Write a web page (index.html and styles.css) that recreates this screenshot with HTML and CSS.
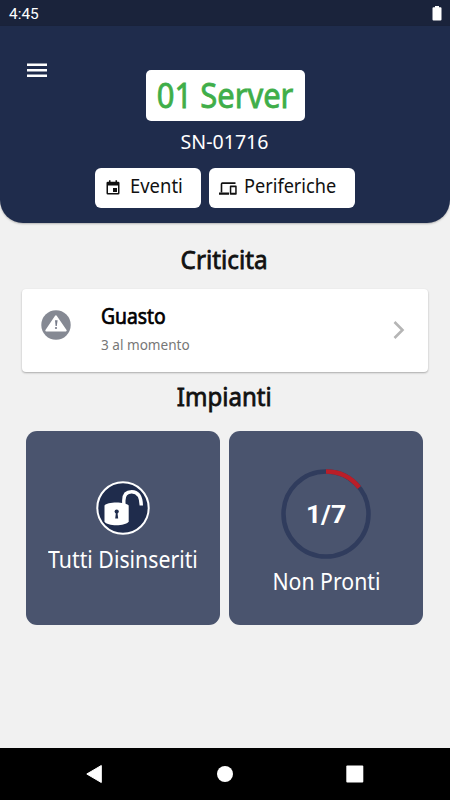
FILE: index.html
```html
<!DOCTYPE html>
<html lang="it">
<head>
<meta charset="utf-8">
<title>01 Server</title>
<link rel="stylesheet" href="styles.css">
</head>
<body>
<div class="status"><span class="time">4:45</span>
<svg class="battery" width="10" height="16" viewBox="0 0 10 16"><path d="M3 1h4v1.200h1.500q1 0 1 1V14.500q0 1-1 1h-7q-1 0-1-1V3.200q0-1 1-1H3z" fill="#fff"/></svg></div>
<header class="header">
<svg class="menu" width="20" height="16" viewBox="0 0 20 16"><path d="M0 2.700h20M0 8.300h20M0 13.700h20" stroke="#fff" stroke-width="2.400"/></svg>
<h1 class="title"><span class="t title-text">01 Server</span></h1>
<div class="serial"><span class="t serial-text">SN-01716</span></div>
<div class="actions">
<div class="btn btn-events"><svg width="14" height="16" viewBox="0 0 14 16"><path d="M1.500 1.700H3V.3h1.500v1.400h5V.3H11v1.400h1.200q1.300 0 1.300 1.300v10.200q0 1.300-1.300 1.300H1.800Q.5 14.500.5 13.200V3q0-1.300 1.300-1.300zM2 5.400v7.700h10V5.400zM7 8h4v4H7z" fill="#111" fill-rule="evenodd"/></svg><span class="t events-text">Eventi</span></div>
<div class="btn btn-devices"><svg width="18" height="14" viewBox="0 0 18 14"><path d="M2.500 10.500V2q0-.9.900-.9H16.500" fill="none" stroke="#111" stroke-width="1.600"/><path d="M0 10.500H10v2.200H0zM11.500 3.500h5.500q.7 0 .7.700v7.800q0 .7-.7.700h-5.500q-.7 0-.7-.7V4.200q0-.7.700-.7zM12.300 5.200v5.600H16.200V5.200z" fill="#111" fill-rule="evenodd"/></svg><span class="t devices-text">Periferiche</span></div>
</div>
</header>
<main>
<h2 class="heading heading-crit"><span class="t crit-text">Criticita</span></h2>
<section class="card">
<svg class="warn" width="30" height="30" viewBox="0 0 30 30"><circle cx="15" cy="15" r="14.700" fill="#858993"/><path d="M14.900 6.300L24.700 20.500H5.300z" fill="#fff" stroke="#fff" stroke-width="2" stroke-linejoin="round"/><path d="M14 10.300h2.600l-.8 5.700h-1.200z" fill="#777c8a"/><circle cx="15" cy="18" r="1.100" fill="#777c8a"/></svg>
<div class="info"><div class="name"><span class="t name-text">Guasto</span></div><div class="detail"><span class="t detail-text">3 al momento</span></div></div>
<svg class="chevron" width="12" height="18" viewBox="0 0 12 18"><path d="M1.500 1L9.500 9l-8 8" fill="none" stroke="#b5b5b5" stroke-width="2.600"/></svg>
</section>
<h2 class="heading heading-imp"><span class="t imp-text">Impianti</span></h2>
<div class="tiles">
<div class="tile tile-lock">
<svg width="54" height="54" viewBox="0 0 54 54"><circle cx="27" cy="27" r="25.700" fill="#1f2c4c" stroke="#fff" stroke-width="2"/><path d="M27.800 25V19.500C27.800 13.500 31 10.800 35.700 10.800C41 10.800 45 14.500 45.300 24.500" fill="none" stroke="#fff" stroke-width="3.400"/><path d="M8.500 24.500C11 20.500 29.500 20.500 32.700 24.500V40.500C29.500 45.500 11 45.500 8.500 40.500z" fill="#fff"/><circle cx="20.700" cy="30.600" r="2.100" fill="#1f2c4c"/><path d="M20 31h1.400l.8 6.500h-3z" fill="#1f2c4c"/></svg>
<div class="label"><span class="t lock-text">Tutti Disinseriti</span></div>
</div>
<div class="tile tile-ready">
<div class="ring"><svg width="90" height="90" viewBox="0 0 90 90"><circle cx="45" cy="45" r="42.500" fill="none" stroke="#303c5d" stroke-width="4.500"/><path d="M45 2.500A42.500 42.500 0 0 1 78.230 18.500" fill="none" stroke="#ba1e28" stroke-width="4.500"/></svg><span class="count">1/7</span></div>
<div class="label"><span class="t ready-text">Non Pronti</span></div>
</div>
</div>
</main>
<nav class="nav">
<svg width="18" height="20" viewBox="0 0 18 20"><path d="M.8 10L15.300 1.500v17z" fill="#fff" stroke="#fff" stroke-linejoin="round"/></svg>
<svg width="18" height="18" viewBox="0 0 18 18"><circle cx="9" cy="9" r="8" fill="#fff"/></svg>
<svg width="18" height="18" viewBox="0 0 18 18"><rect x=".3" y=".5" width="17" height="17" rx="1" fill="#fff"/></svg>
</nav>
</body>
</html>
```
FILE: styles.css
```css
* { box-sizing: border-box; }
body {
  margin: 0;
  width: 450px;
  height: 800px;
  display: flex;
  flex-direction: column;
  overflow: hidden;
  background: #f1f1f1;
  font-family: "Noto Sans", "Open Sans", sans-serif;
}
svg { display: block; flex: none; }
.t { display: inline-block; white-space: nowrap; }
.status {
  flex: none;
  height: 26px;
  padding: 0 8px 0 9px;
  display: flex;
  justify-content: space-between;
  align-items: center;
  background: #1a233b;
  color: #fff;
  font: 15.4px/28px Roboto, sans-serif;
}
.time { padding-top: 2px; }
.header {
  position: relative;
  flex: none;
  height: 197px;
  padding-top: 44px;
  display: flex;
  flex-direction: column;
  align-items: center;
  border-radius: 0 0 23px 23px;
  background: #1f2c4c;
  box-shadow: 0 1px 2px rgba(0, 0, 0, .25);
}
.menu { position: absolute; left: 27px; top: 36px; }
.title {
  margin: 0;
  width: 159px;
  height: 51px;
  display: flex;
  justify-content: center;
  border-radius: 5px;
  background: #fff;
  color: #3fae49;
  font-size: 34px;
  font-weight: 400;
  line-height: 50px;
  -webkit-text-stroke: .8px #3fae49;
}
.title-text { transform: scaleX(.91); }
.serial {
  margin-top: 5px;
  color: #fff;
  font-size: 20.3px;
  line-height: 31px;
}
.serial-text { transform: scaleX(.965); }
.actions { display: flex; gap: 8px; margin-top: 11px; }
.btn {
  height: 40px;
  display: flex;
  border-radius: 6px;
  background: #fff;
  color: #111;
  font-size: 19px;
  line-height: 37px;
}
.btn .t { transform-origin: left; }
.btn-events { width: 106px; padding-left: 10px; }
.btn-events svg { margin: 12px 10px 0 1px; }
.btn-devices { width: 146px; padding-left: 10px; }
.btn-devices svg { margin: 14px 7px 0 0; }
.events-text { transform: scaleX(.97); }
.devices-text { transform: scaleX(.955); }
.heading {
  margin: 0;
  text-align: center;
  color: #111;
  font-size: 26px;
  font-weight: 400;
  line-height: 40px;
  -webkit-text-stroke: .8px #111;
}
.heading-crit { margin-top: 16px; }
.heading-imp { margin-top: 4px; }
.crit-text { transform: translateX(-.5px) scaleX(.935); }
.imp-text { transform: translateX(-1px) scaleX(.925); }
.card {
  margin: 10px 22px 0;
  height: 83px;
  padding: 11px 23px 0 19px;
  display: flex;
  border-radius: 4px;
  background: #fff;
  box-shadow: 0 1px 2px rgba(0, 0, 0, .3);
}
.warn { margin-top: 10px; }
.info { flex: 1; padding-left: 30px; }
.info .t { transform-origin: left; }
.name {
  color: #000;
  font-size: 21px;
  line-height: 32px;
  -webkit-text-stroke: .7px #000;
}
.detail {
  margin-top: 1px;
  color: #777;
  font-size: 14.3px;
  line-height: 24px;
}
.name-text { transform: scaleX(.92); }
.detail-text { transform: scaleX(.95); }
.chevron { margin-top: 21px; }
.tiles { display: flex; justify-content: center; gap: 9px; margin: 15px 1px 0 0; }
.tile {
  width: 194px;
  height: 194px;
  display: flex;
  flex-direction: column;
  align-items: center;
  border-radius: 11px;
  background: #4a546e;
  color: #fff;
}
.tile-lock { padding-top: 50px; }
.tile-ready { padding-top: 38px; }
.label { font-size: 23px; line-height: 32px; }
.tile-lock .label { margin-top: 8px; }
.tile-ready .label { margin-top: 6px; }
.lock-text { transform: scaleX(.925); }
.ready-text { transform: scaleX(.925); }
.ring { display: grid; place-items: center; }
.ring > * { grid-area: 1 / 1; }
.count { font: 700 26.5px/30px Roboto, sans-serif; }
.nav {
  flex: none;
  height: 52px;
  margin-top: auto;
  padding: 0 86px;
  display: flex;
  justify-content: space-between;
  align-items: center;
  background: #000;
}
```
